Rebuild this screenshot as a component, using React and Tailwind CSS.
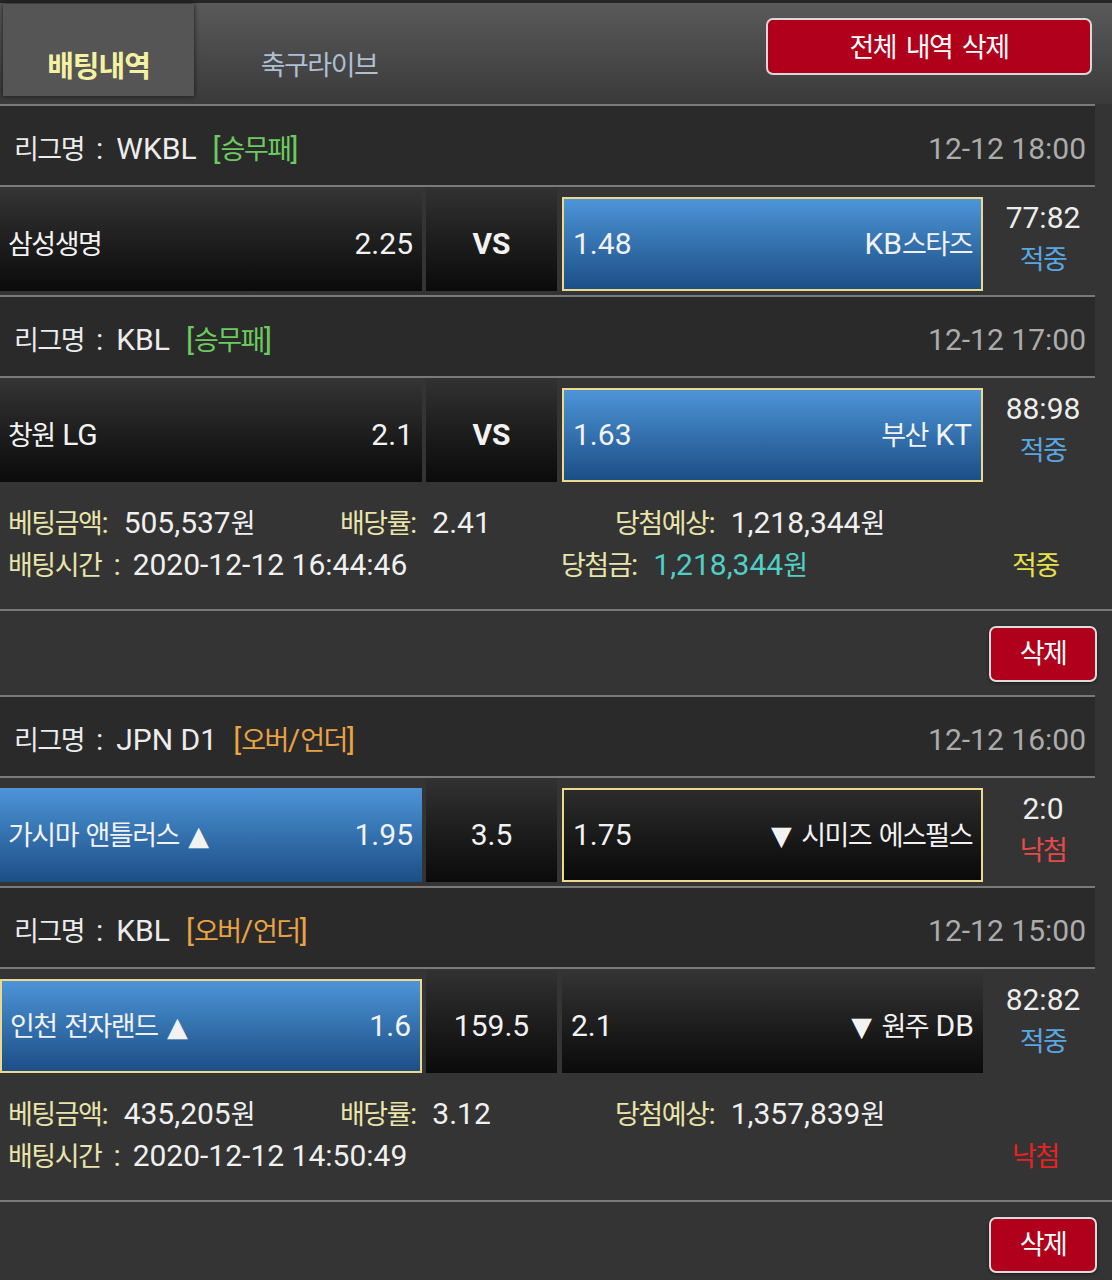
import React from 'react'

const bets = [
  {
    games: [
      { league: 'WKBL', type: '승무패', date: '12-12 18:00', home: '삼성생명', homeOdds: '2.25', mid: 'VS', away: 'KB스타즈', awayOdds: '1.48', blue: 'away', pick: 'away', score: '77:82', result: '적중' },
      { league: 'KBL', type: '승무패', date: '12-12 17:00', home: '창원 LG', homeOdds: '2.1', mid: 'VS', away: '부산 KT', awayOdds: '1.63', blue: 'away', pick: 'away', score: '88:98', result: '적중' },
    ],
    amount: '505,537', rate: '2.41', expected: '1,218,344', time: '2020-12-12 16:44:46', win: '1,218,344', status: '적중',
  },
  {
    games: [
      { league: 'JPN D1', type: '오버/언더', date: '12-12 16:00', home: '가시마 앤틀러스 ▲', homeOdds: '1.95', mid: '3.5', away: '▼ 시미즈 에스펄스', awayOdds: '1.75', blue: 'home', pick: 'away', score: '2:0', result: '낙첨' },
      { league: 'KBL', type: '오버/언더', date: '12-12 15:00', home: '인천 전자랜드 ▲', homeOdds: '1.6', mid: '159.5', away: '▼ 원주 DB', awayOdds: '2.1', blue: 'home', pick: 'home', score: '82:82', result: '적중' },
    ],
    amount: '435,205', rate: '3.12', expected: '1,357,839', time: '2020-12-12 14:50:49', win: null, status: '낙첨',
  },
]

// hangul runs get a narrower setting so they match the phone font; arrows are drawn from DejaVu
function T({ children }) {
  const parts = String(children).split(/([가-힣]+|[▲▼])/)
  return parts.map((p, i) => {
    if (/[가-힣]/.test(p)) return <span key={i} className="text-[27px] tracking-[-1.5px]">{p}</span>
    if (p === '▲' || p === '▼') return <span key={i} className="text-[27px] font-[DejaVu_Sans,sans-serif] mx-[2px]">{p}</span>
    return <span key={i}>{p}</span>
  })
}

const Line = ({ full }) => (
  <div className={full ? 'h-[2px] bg-[#7a7a7a]' : 'h-[2px] w-[1095px] bg-[#7a7a7a]'} />
)

// "label: value" pair used in the summary rows
const Pair = ({ label, value, valueCls = 'text-[#f0f0f0]' }) => (
  <>
    <span className="text-[#e9e4aa]"><T>{label}</T></span>
    <span className={`ml-[15px] ${valueCls}`}><T>{value}</T></span>
  </>
)

function Cell({ name, odds, side, blue, pick }) {
  const raised = blue || pick
  let cls = 'h-[104px] bg-gradient-to-b from-[#353535] to-[#0b0b0b]'
  if (raised) cls = 'h-[94px] bg-gradient-to-b from-[#2c2c2c] to-[#0a0a0a]'
  if (blue) cls = 'h-[94px] bg-gradient-to-b from-[#4d95d8] to-[#1c4f86]'
  const border = pick ? 'border-2 border-[#ecd98e]' : ''
  const pad = raised ? '' : 'pt-[10px]'
  const w = side === 'home' ? 'w-[422px]' : 'w-[421px]'
  return (
    <div className={`${w} ${cls} ${border} ${pad} flex items-center justify-between ${side === 'home' ? 'pl-[8px] pr-[9px]' : 'pl-[9px] pr-[9px]'} text-[#f2f2f2]`}>
      {side === 'home' ? (
        <>
          <span><T>{name}</T></span>
          <span>{odds}</span>
        </>
      ) : (
        <>
          <span>{odds}</span>
          <span><T>{name}</T></span>
        </>
      )}
    </div>
  )
}

function Game({ g }) {
  return (
    <>
      <div className="w-[1095px] h-[79px] bg-[#2a2a2a] flex items-center justify-between pl-[14px] pr-[9px] pt-[6px]">
        <div className="text-[#ececec]">
          <T>리그명</T><span className="ml-[12px] mr-[13px]">:</span>{g.league}
          <span className={`ml-[16px] ${g.type === '승무패' ? 'text-[#6ccb5f]' : 'text-[#e9a244]'}`}>[<T>{g.type}</T>]</span>
        </div>
        <div className="text-[#acacac]">{g.date}</div>
      </div>
      <Line />
      <div className="w-[1095px] h-[108px] flex items-end pb-[4px]">
        <Cell side="home" name={g.home} odds={g.homeOdds} blue={g.blue === 'home'} pick={g.pick === 'home'} />
        <div className={`w-[131px] ml-[4px] h-[104px] pt-[10px] bg-gradient-to-b from-[#323232] to-[#0b0b0b] flex items-center justify-center text-[#f2f2f2] ${g.mid === 'VS' ? 'font-bold' : ''}`}>
          {g.mid}
        </div>
        <div className="ml-[5px]">
          <Cell side="away" name={g.away} odds={g.awayOdds} blue={g.blue === 'away'} pick={g.pick === 'away'} />
        </div>
        <div className="flex-1 self-stretch flex flex-col items-center pt-[12px] pl-[8px]">
          <div className="text-[#ededed] h-[38px] flex items-center">{g.score}</div>
          <div className={`h-[46px] flex items-center ${g.result === '적중' ? 'text-[#5aa6e2]' : 'text-[#e84a4a]'}`}><T>{g.result}</T></div>
        </div>
      </div>
    </>
  )
}

function Bet({ b, first }) {
  return (
    <div>
      {!first && <Line />}
      {b.games.map((g, i) => (
        <div key={i}>
          {i > 0 && <Line />}
          <Game g={g} />
        </div>
      ))}
      <div className="h-[123px] pt-[16px] pl-[8px]">
        <div className="h-[42px] flex items-center">
          <div className="w-[332px]"><Pair label="베팅금액:" value={b.amount + '원'} /></div>
          <div className="w-[275px]"><Pair label="배당률:" value={b.rate} /></div>
          <div><Pair label="당첨예상:" value={b.expected + '원'} /></div>
        </div>
        <div className="h-[42px] flex items-center">
          <div className="w-[553px]">
            <span className="text-[#e9e4aa]"><T>배팅시간</T><span className="ml-[12px]">:</span></span>
            <span className="ml-[12px] text-[#f0f0f0]">{b.time}</span>
          </div>
          <div className="w-[451px]">
            {b.win && <Pair label="당첨금:" value={b.win + '원'} valueCls="text-[#4fcfc6]" />}
          </div>
          <div className={b.status === '적중' ? 'text-[#e6e04a]' : 'text-[#e82222]'}><T>{b.status}</T></div>
        </div>
      </div>
      <Line full />
      <div className="h-[84px] flex justify-end items-start pt-[15px] pr-[15px]">
        <button className="w-[108px] h-[56px] rounded-[7px] border-2 border-[#dcdcdc] bg-[#b1001b] text-white flex items-center justify-center shadow-[0_1px_3px_rgba(0,0,0,0.5)]">
          <T>삭제</T>
        </button>
      </div>
    </div>
  )
}

export default function App() {
  return (
    <div className="w-[1112px] min-h-[1280px] bg-[#343434] font-[Roboto,Noto_Sans_CJK_KR,sans-serif] text-[30px] leading-none overflow-hidden">
      {/* tabs + clear-all */}
      <div className="h-[104px] border-t-[3px] border-[#262626] bg-gradient-to-b from-[#5a5a5a] to-[#3a3a3a] flex items-start">
        <div className="ml-[3px] mt-[1px] w-[191px] h-[92px] bg-[#555555] shadow-[0_0_5px_rgba(0,0,0,0.7)] flex items-center justify-center pt-[34px] font-bold text-[#f4f1a2]">
          <span className="text-[29px] tracking-[-1px]">배팅내역</span>
        </div>
        <div className="w-[250px] h-[93px] flex items-center justify-center pt-[34px] text-[#aebfd3]">
          <T>축구라이브</T>
        </div>
        <button className="ml-auto mr-[20px] mt-[15px] w-[326px] h-[57px] rounded-[7px] border-2 border-[#d8d8d8] bg-[#b1001b] text-white flex items-center justify-center">
          <span className="tracking-[2px]"><T>전체 내역 삭제</T></span>
        </button>
      </div>
      <Line />
      {bets.map((b, i) => <Bet key={i} b={b} first={i === 0} />)}
    </div>
  )
}
